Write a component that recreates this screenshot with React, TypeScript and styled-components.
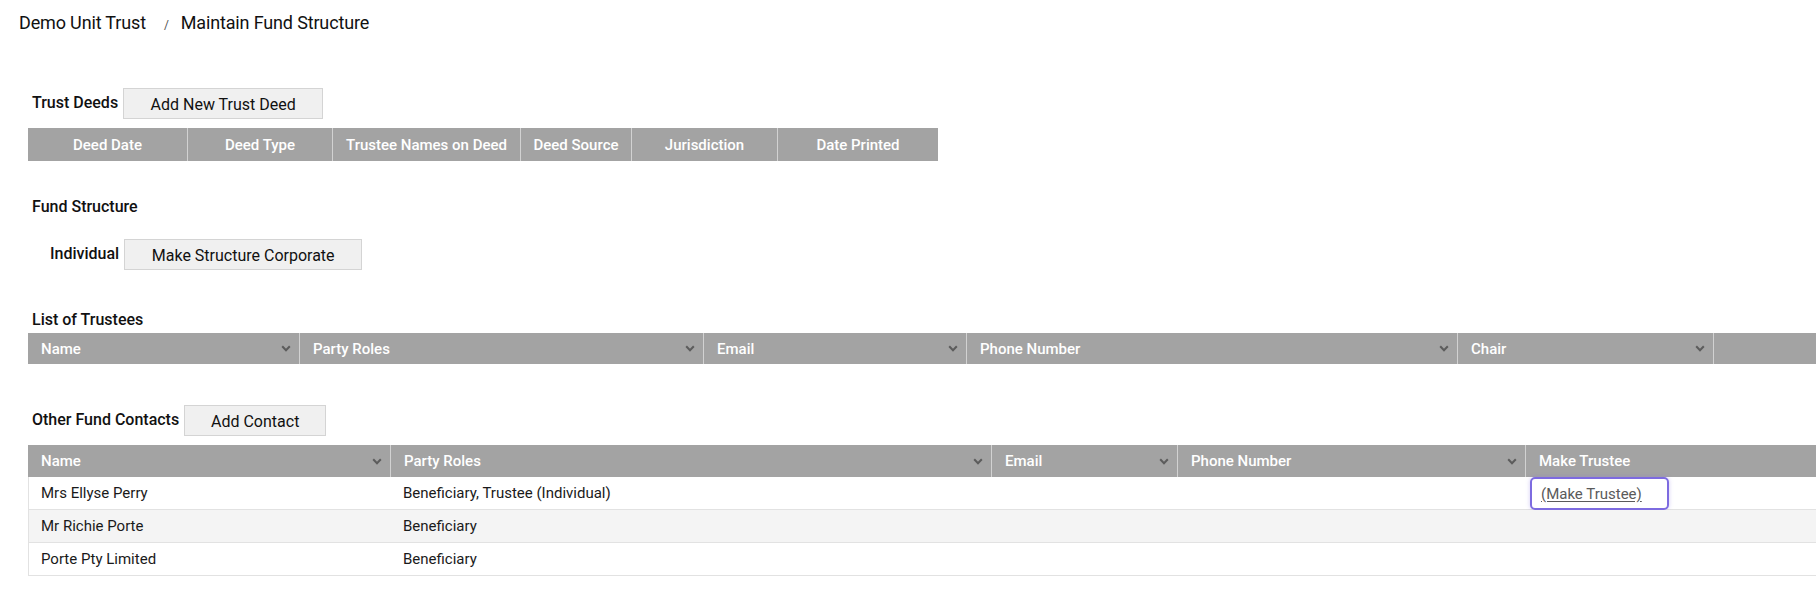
import React from "react";
import styled, { createGlobalStyle } from "styled-components";

const GlobalStyle = createGlobalStyle`
  html, body {
    margin: 0;
    padding: 0;
    background: #ffffff;
    overflow: hidden;
  }
  body {
    font-family: Roboto, "Liberation Sans", Arial, sans-serif;
    color: #1a1a1a;
  }
  * { box-sizing: border-box; }
`;

const Page = styled.div`
  width: 1816px;
  display: flex;
  flex-direction: column;
`;

const Breadcrumb = styled.nav`
  display: flex;
  align-items: baseline;
  padding: 12px 0 0 19px;
  height: 40px;
  font-size: 18px;
  letter-spacing: -0.15px;
  line-height: 22px;
  color: #111;
`;

const Crumb = styled.span`
  color: #111;
`;

const CrumbSep = styled.span`
  font-size: 12px;
  color: #555;
  margin: 0 12px 0 18px;
`;

const Content = styled.main`
  display: flex;
  flex-direction: column;
  padding: 48px 0 0 28px;
`;

const SectionRow = styled.div<{ $indent?: number; $top?: number }>`
  display: flex;
  align-items: center;
  gap: 5px;
  margin-top: ${(p) => p.$top ?? 0}px;
  padding-left: ${(p) => p.$indent ?? 4}px;
  height: 31px;
`;

const Label = styled.span`
  font-size: 16px;
  font-weight: 500;
  color: #111;
  margin-bottom: 3px;
  white-space: nowrap;
`;

const SectionTitle = styled.div<{ $top: number }>`
  font-size: 16px;
  font-weight: 500;
  color: #111;
  line-height: 19px;
  padding-left: 4px;
  margin-top: ${(p) => p.$top}px;
`;

const Button = styled.button<{ $w: number }>`
  width: ${(p) => p.$w}px;
  height: 31px;
  background: #f0f0f0;
  border: 1px solid #d4d4d4;
  border-radius: 0;
  font-family: Roboto, "Liberation Sans", Arial, sans-serif;
  font-size: 16px;
  color: #111;
  padding: 2px 0 0;
  cursor: pointer;
`;

const Table = styled.div<{ $width?: string; $top: number }>`
  display: flex;
  flex-direction: column;
  width: ${(p) => p.$width ?? "100%"};
  margin-top: ${(p) => p.$top}px;
`;

const HeaderRow = styled.div<{ $h: number }>`
  display: flex;
  height: ${(p) => p.$h}px;
  background: #a3a3a3;
`;

const HeadCell = styled.div<{ $w?: number; $center?: boolean; $last?: boolean }>`
  display: flex;
  align-items: center;
  justify-content: ${(p) => (p.$center ? "center" : "space-between")};
  ${(p) => (p.$w ? `width: ${p.$w}px; flex: none;` : "flex: 1;")}
  padding: ${(p) => (p.$center ? "0" : "0 8px 0 13px")};
  color: #ffffff;
  font-size: 15px;
  font-weight: 500;
  border-right: ${(p) => (p.$last ? "none" : "1px solid #d2d2d2")};
  white-space: nowrap;
`;

const Chevron = styled.svg`
  width: 10px;
  height: 7px;
  flex: none;
`;

const BodyRow = styled.div<{ $alt?: boolean }>`
  display: flex;
  height: 33px;
  background: ${(p) => (p.$alt ? "#f4f4f4" : "#ffffff")};
  border-bottom: 1px solid #e2e2e2;
  border-left: 1px solid #e2e2e2;
`;

const Cell = styled.div<{ $w?: number }>`
  display: flex;
  align-items: center;
  ${(p) => (p.$w ? `width: ${p.$w}px; flex: none;` : "flex: 1;")}
  padding: 0 12px;
  font-size: 15px;
  color: #1a1a1a;
  white-space: nowrap;
`;

const LinkCell = styled.div`
  flex: 1;
  display: flex;
  align-items: stretch;
  padding: 0 0 0 4px;
`;

const FocusLink = styled.a`
  display: flex;
  align-items: center;
  padding: 0 25px 0 9px;
  margin-bottom: -1px;
  font-size: 15px;
  color: #5a5a5a;
  text-decoration: underline;
  text-underline-offset: 2px;
  border: 2px solid #7d6be0;
  border-radius: 5px;
  box-shadow: 0 0 4px rgba(125, 107, 224, 0.35);
  cursor: pointer;
`;

const Down = () => (
  <Chevron viewBox="0 0 10 7">
    <polyline points="1.2,1.2 5,5.2 8.8,1.2" fill="none" stroke="#5c5c5c" strokeWidth="2" />
  </Chevron>
);

type Col = { title: string; w?: number; chevron?: boolean };

const deedCols: Col[] = [
  { title: "Deed Date", w: 160 },
  { title: "Deed Type", w: 145 },
  { title: "Trustee Names on Deed", w: 188 },
  { title: "Deed Source", w: 111 },
  { title: "Jurisdiction", w: 146 },
  { title: "Date Printed", w: 160 },
];

const trusteeCols: Col[] = [
  { title: "Name", w: 272, chevron: true },
  { title: "Party Roles", w: 404, chevron: true },
  { title: "Email", w: 263, chevron: true },
  { title: "Phone Number", w: 491, chevron: true },
  { title: "Chair", w: 256, chevron: true },
  { title: "" },
];

const contactCols: Col[] = [
  { title: "Name", w: 363, chevron: true },
  { title: "Party Roles", w: 601, chevron: true },
  { title: "Email", w: 186, chevron: true },
  { title: "Phone Number", w: 348, chevron: true },
  { title: "Make Trustee" },
];

const contacts = [
  { name: "Mrs Ellyse Perry", roles: "Beneficiary, Trustee (Individual)", link: true },
  { name: "Mr Richie Porte", roles: "Beneficiary", link: false },
  { name: "Porte Pty Limited", roles: "Beneficiary", link: false },
];

const Header = ({ cols, h, center }: { cols: Col[]; h: number; center?: boolean }) => (
  <HeaderRow $h={h}>
    {cols.map((c, i) => (
      <HeadCell key={i} $w={c.w} $center={center} $last={center ? i === cols.length - 1 : !c.w}>
        <span>{c.title}</span>
        {c.chevron && <Down />}
      </HeadCell>
    ))}
  </HeaderRow>
);

export default function App() {
  return (
    <>
      <GlobalStyle />
      <Page>
        <Breadcrumb>
          <Crumb>Demo Unit Trust</Crumb>
          <CrumbSep>/</CrumbSep>
          <Crumb>Maintain Fund Structure</Crumb>
        </Breadcrumb>
        <Content>
          <SectionRow>
            <Label>Trust Deeds</Label>
            <Button $w={200}>Add New Trust Deed</Button>
          </SectionRow>
          <Table $width="910px" $top={9}>
            <Header cols={deedCols} h={33} center />
          </Table>

          <SectionTitle $top={36}>Fund Structure</SectionTitle>
          <SectionRow $indent={22} $top={23}>
            <Label>Individual</Label>
            <Button $w={238}>Make Structure Corporate</Button>
          </SectionRow>

          <SectionTitle $top={40}>List of Trustees</SectionTitle>
          <Table $top={4}>
            <Header cols={trusteeCols} h={31} />
          </Table>

          <SectionRow $top={41}>
            <Label>Other Fund Contacts</Label>
            <Button $w={142}>Add Contact</Button>
          </SectionRow>
          <Table $top={9}>
            <Header cols={contactCols} h={32} />
            {contacts.map((r, i) => (
              <BodyRow key={r.name} $alt={i === 1}>
                <Cell $w={362}>{r.name}</Cell>
                <Cell $w={601}>{r.roles}</Cell>
                <Cell $w={186} />
                <Cell $w={348} />
                {r.link ? (
                  <LinkCell>
                    <FocusLink>(Make Trustee)</FocusLink>
                  </LinkCell>
                ) : (
                  <Cell />
                )}
              </BodyRow>
            ))}
          </Table>
        </Content>
      </Page>
    </>
  );
}
